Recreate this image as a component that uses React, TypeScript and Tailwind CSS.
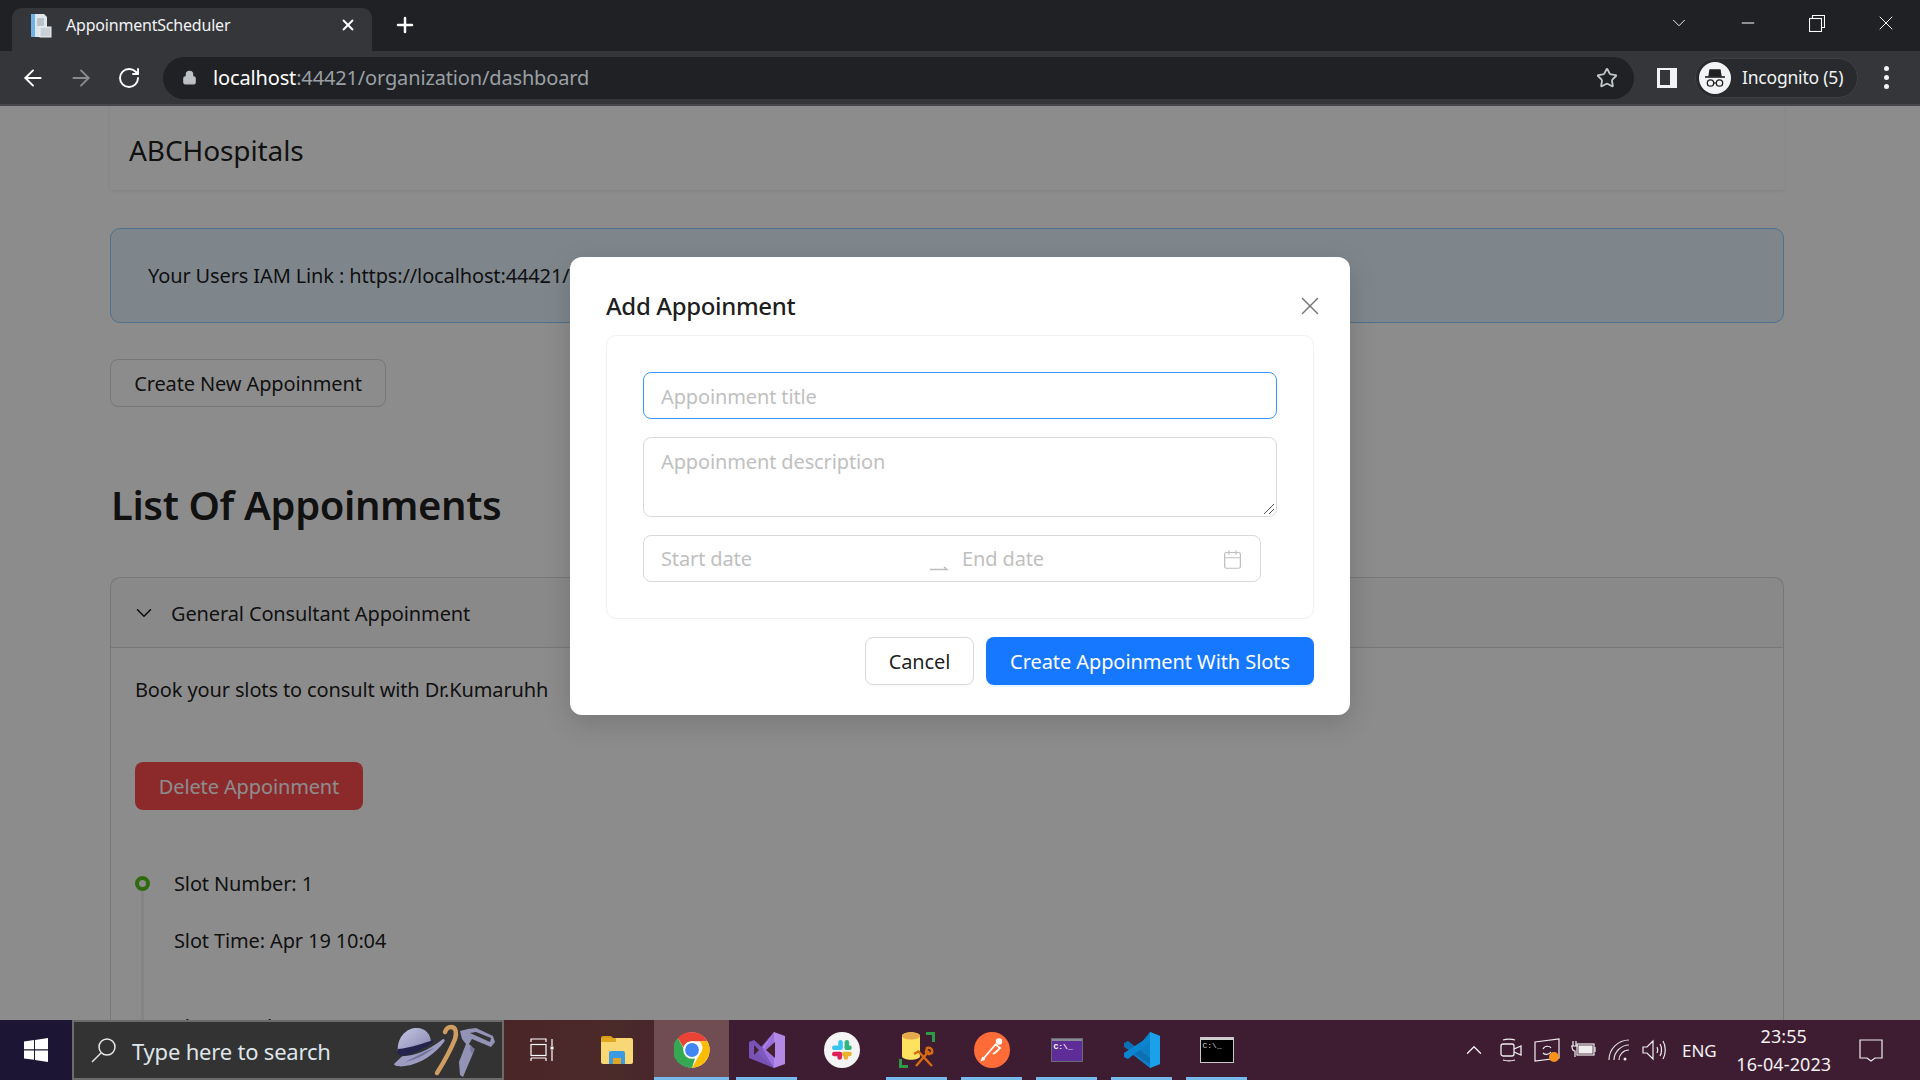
import React from "react";
import { ArrowLeft, ArrowRight, RotateCw, Lock, Star, Plus, X, ChevronDown, ChevronUp, Calendar, Minus } from "lucide-react";

const Seg = "font-['Noto_Sans','Open_Sans',sans-serif]";

function ChromeLogo({ s = 36 }: { s?: number }) {
  return (
    <svg width={s} height={s} viewBox="0 0 48 48">
      <circle cx="24" cy="24" r="23.5" fill="#fff" />
      <path d="M24 .5a23.5 23.5 0 0 1 20.4 11.8H24a11.7 11.7 0 0 0-11.2 8.2L5 7.9A23.5 23.5 0 0 1 24 .5z" fill="#ea4335" />
      <path d="M44.4 12.3A23.5 23.5 0 0 1 24 47.5l10.1-17.6a11.7 11.7 0 0 0 0-17.6z" fill="#fbbc04" />
      <path d="M24 47.5A23.5 23.5 0 0 1 5 7.9l10.1 17.7a11.7 11.7 0 0 0 13 9.4z" fill="#34a853" />
      <circle cx="24" cy="24" r="11.7" fill="#fff" />
      <circle cx="24" cy="24" r="9.2" fill="#4285f4" />
    </svg>
  );
}

function TabIcon() {
  return (
    <svg width="26" height="26" viewBox="0 0 26 26">
      <path d="M4 2h13l3 3v20H4z" fill="#dfe6ec" />
      <path d="M4 2h4v23H4z" fill="#6fb3e6" />
      <rect x="10" y="6" width="7" height="8" fill="#b9c3cc" />
      <rect x="13" y="15" width="11" height="10" fill="#c9d0d6" stroke="#eef1f4" />
    </svg>
  );
}

function TaskView() {
  return (
    <svg width="24" height="24" viewBox="0 0 24 24" fill="none" stroke="#fff" strokeWidth="1.2">
      <path d="M1 4V1h15v3M1 20v3M16 20v3M1 20h15" />
      <rect x="1" y="6.5" width="15" height="11" />
      <path d="M22 1v7M22 12v11" />
      <rect x="20.5" y="8.5" width="3" height="3" fill="#fff" stroke="none" />
    </svg>
  );
}

function Explorer() {
  return (
    <svg width="32" height="28" viewBox="0 0 32 28">
      <path d="M0 2a2 2 0 0 1 2-2h8l3 3H0z" fill="#d89d1b" />
      <rect x="0" y="2" width="32" height="26" rx="2" fill="#f8d775" />
      <rect x="0" y="2" width="15" height="4" fill="#e2a81f" />
      <path d="M8 28V17a2 2 0 0 1 2-2h12a2 2 0 0 1 2 2v11h-4v-6h-8v6z" fill="#3b9ae1" />
      <rect x="12" y="22" width="8" height="6" fill="#e0a526" />
    </svg>
  );
}

function VS() {
  return (
    <svg width="36" height="36" viewBox="0 0 36 36">
      <path d="M25 0l11 4v28l-11 4L9 21 13 15z" fill="#b388e6" />
      <path d="M25 0L9 21l-5-4L0 19v-2l5-6 6 5z" fill="#7b55bd" />
      <path d="M0 10l5-2 20 18v10L0 26z" fill="#7b55bd" opacity="0.95" />
      <path d="M25 0v36L14 18z" fill="#9b6fdc" />
      <path d="M26 10v16l-9-8z" fill="#45202f" />
      <path d="M5 13l5 5-5 5z" fill="#45202f" />
    </svg>
  );
}

function Slack() {
  return (
    <svg width="36" height="36" viewBox="0 0 36 36">
      <circle cx="18" cy="18" r="18" fill="#f4f4f4" />
      <g transform="translate(8 8) scale(0.9)">
        <rect x="7" y="0" width="5" height="9.5" rx="2.5" fill="#36c5f0" />
        <rect x="0" y="6" width="12" height="5" rx="2.5" fill="#36c5f0" />
        <rect x="14" y="0" width="5" height="11" rx="2.5" fill="#2eb67d" />
        <rect x="14" y="6" width="8" height="5" rx="2.5" fill="#2eb67d" />
        <rect x="11" y="13" width="11" height="5" rx="2.5" fill="#ecb22e" />
        <rect x="13" y="13" width="5" height="9" rx="2.5" fill="#ecb22e" />
        <rect x="0" y="13" width="11" height="5" rx="2.5" fill="#e01e5a" />
        <rect x="6" y="13" width="5" height="9" rx="2.5" fill="#e01e5a" />
      </g>
    </svg>
  );
}

function SqlTool() {
  return (
    <svg width="36" height="36" viewBox="0 0 36 36" fill="none">
      <path d="M3 4c0-5 18-5 18 0v20c0 5-18 5-18 0z" fill="#fde25f" />
      <ellipse cx="12" cy="4" rx="9" ry="3.5" fill="#e5a84a" />
      <path d="M27 1.5h7.5V10M1.5 27v7.5H9" stroke="#2f9a44" strokeWidth="3" />
      <path d="M17 34l13-15M33 34L19 19M15 22l5-3M28 16c3-1 6 1 5 5l-3 1-3-2z" stroke="#d96a12" strokeWidth="2.5" />
    </svg>
  );
}

function Postman() {
  return (
    <svg width="36" height="36" viewBox="0 0 36 36">
      <circle cx="18" cy="18" r="18" fill="#ff6c37" />
      <path d="M9 27l13-15M21 12l5 4-4 4-3 2M11 27l-3 1 1-3" stroke="#fff" strokeWidth="1.8" fill="none" />
      <circle cx="25" cy="9.5" r="3.2" fill="#fff" />
    </svg>
  );
}

function Term() {
  return (
    <div className="w-[32px] h-[24px] bg-[#5f2d98] border border-[#686a76] relative">
      <div className="h-[2px] bg-[#8a8a96]" />
      <span className="absolute left-[2px] top-[4px] text-[8px] leading-none font-['Liberation_Mono',monospace] text-white font-bold">C:\_</span>
    </div>
  );
}

function VSCode() {
  return (
    <svg width="36" height="36" viewBox="0 0 36 36">
      <path d="M26 0l10 4v28l-10 4L8 22z" fill="#0e7fc6" />
      <path d="M26 0l10 4v28l-10 4z" fill="#1ba1ea" />
      <path d="M0 11l4-2 22 17v6L0 15z" fill="#0d6fb3" />
      <path d="M0 25l4 2 22-17V4L0 21z" fill="#0a86d0" />
    </svg>
  );
}

function Cmd() {
  return (
    <div className="w-[34px] h-[26px] bg-black border border-[#c9c9c9] relative">
      <div className="h-[2px] bg-[#cfcfcf]" />
      <span className="absolute left-[2px] top-[4px] text-[8px] leading-none font-['Liberation_Mono',monospace] text-[#d8d8d8]">C:\_</span>
    </div>
  );
}

function SearchArt() {
  return (
    <svg width="118" height="60" viewBox="0 0 118 60">
      <defs>
        <linearGradient id="crown" x1="0" y1="0" x2="1" y2="1">
          <stop offset="0" stopColor="#c6c6e6" />
          <stop offset="1" stopColor="#8484ac" />
        </linearGradient>
      </defs>
      <path d="M13 33c-2-14 7-24 17-25 10-1 16 6 16 15z" fill="url(#crown)" />
      <path d="M13 28c11 4 24 0 34-9l1 4 -30 15z" fill="#8a8ab2" opacity="0" />
      <path d="M9 44c4-4 7-7 9-8 12 0 24-5 40-17 2 0 2 2 1 3C50 34 36 44 20 46c-5 1-11 0-11-2z" fill="#9c9cc2" />
      <path d="M17 36c10-1 21-7 30-13l2-3c-11 3-23 8-36 9l-1 4z" fill="#23234d" />
      <path d="M20 42c10-2 20-7 29-14-7 2-16 8-29 14z" fill="#70709a" />
      <path d="M52 53c7-11 14-24 18-34 2-6 1-12-4-12-3 0-5 2-6 5" fill="none" stroke="#cf9d62" strokeWidth="4.5" strokeLinecap="round" />
      <path d="M83 9l8-1 17 8 2 6-4 5-19-8-3 5c3 2 5 5 5 7l-11 26-3-2-1-13 7-18-4-5-2-8z" fill="#9393b6" />
      <path d="M85 13l20 9 1-4-15-6z" fill="#333333" />
      <path d="M85 26l5 3-3 5-2-4z" fill="#77779c" />
    </svg>
  );
}

function TaskSlot({ active, underline, children }: { active?: boolean; underline?: boolean; children: React.ReactNode }) {
  return (
    <div className={`w-[75px] h-[60px] relative flex items-center justify-center ${active ? "bg-[#6f4d52]" : ""}`}>
      {children}
      {underline && <div className={`absolute bottom-0 h-[3px] bg-[#76b9ed] ${active ? "left-0 right-0" : "left-[7px] right-[7px]"}`} />}
    </div>
  );
}

function Taskbar() {
  return (
    <div className="h-[60px] shrink-0 flex items-stretch bg-[#3e1c31] relative z-30 font-['Noto_Sans',sans-serif] text-white">
      <div className="w-[72px] bg-[#1c1533] flex items-center justify-center">
        <svg width="24" height="24" viewBox="0 0 24 24" fill="#fff">
          <path d="M0 3.5l10-1.4v9.2H0zM11 2l13-2v11.3H11zM0 12.4h10v9.4L0 20.4zM11 12.4h13V24l-13-2z" />
        </svg>
      </div>
      <div className="w-[432px] bg-[#333333] border-2 border-[#6b6b6b] flex items-center pl-[17px] relative">
        <svg width="26" height="26" viewBox="0 0 26 26" fill="none" stroke="#e8e8e8" strokeWidth="1.5">
          <circle cx="16" cy="10" r="8" />
          <path d="M10 16L1 25" />
        </svg>
        <span className="ml-[15px] pt-[3px] text-[22px] tracking-[-0.2px] text-[#dfe6ea]">Type here to search</span>
        <div className="absolute left-[311px] top-[-2px]"><SearchArt /></div>
      </div>
      <div className="flex bg-gradient-to-r from-[#4a2528] via-[#4b2a2a] to-[#421f30]">
        <TaskSlot><TaskView /></TaskSlot>
        <TaskSlot><Explorer /></TaskSlot>
        <TaskSlot active underline><ChromeLogo /></TaskSlot>
      </div>
      <div className="flex">
        <TaskSlot underline><VS /></TaskSlot>
        <TaskSlot><Slack /></TaskSlot>
        <TaskSlot underline><SqlTool /></TaskSlot>
        <TaskSlot underline><Postman /></TaskSlot>
        <TaskSlot underline><Term /></TaskSlot>
        <TaskSlot underline><VSCode /></TaskSlot>
        <TaskSlot underline><Cmd /></TaskSlot>
      </div>
      <div className="flex-1 flex items-center pl-[207px] text-[#f2f2f2]">
        <ChevronUp size={26} strokeWidth={1.2} />
        <svg className="ml-[12px]" width="24" height="24" viewBox="0 0 24 24" fill="none" stroke="#eee" strokeWidth="1.3">
          <rect x="2" y="6" width="13" height="12" rx="2" />
          <path d="M15 11l7-3v9l-7-3M4 2c3-1 9-1 12 0M4 22c3 1 9 1 12 0" />
        </svg>
        <svg className="ml-[11px]" width="26" height="26" viewBox="0 0 26 26" fill="none" stroke="#eee" strokeWidth="1.2">
          <path d="M1 5l24-3v19l-24 3z" />
          <path d="M9 12c2-4 7-3 8-1M17 15c-2 3-6 3-8 1" />
          <circle cx="20" cy="20" r="5" fill="#f7931a" stroke="none" />
        </svg>
        <svg className="ml-[10px]" width="26" height="20" viewBox="0 0 26 20" fill="none" stroke="#eee" strokeWidth="1.2">
          <rect x="7" y="4" width="17" height="11" />
          <rect x="9" y="6" width="13" height="7" fill="#eee" />
          <path d="M1 6h7M3 1v5M6 1v5M2 6c0 4 1 5 3 5v6" />
          <path d="M25 7v5" />
        </svg>
        <svg className="ml-[12px]" width="22" height="22" viewBox="0 0 22 22" fill="none" stroke="#ddd" strokeWidth="1.2">
          <path d="M1 21C1 10 10 1 21 1M6 21C6 13 13 6 21 6M11 21c0-5 4-10 10-10" />
          <circle cx="17" cy="20" r="1.5" fill="#eee" stroke="none" />
        </svg>
        <svg className="ml-[12px]" width="24" height="22" viewBox="0 0 24 22" fill="none" stroke="#eee" strokeWidth="1.2">
          <path d="M1 8h4l6-6v18l-6-6H1zM15 8c1 2 1 4 0 6M18 5c2 3 2 9 0 12M21 2c3 5 3 13 0 18" />
        </svg>
        <span className="ml-[16px] text-[17px] leading-none">ENG</span>
        <div className="w-[108px] ml-[13px] flex flex-col items-center text-[18px] leading-[28px] tracking-[0.1px]">
          <span>23:55</span>
          <span>16-04-2023</span>
        </div>
        <svg className="ml-[20px]" width="26" height="26" viewBox="0 0 26 26" fill="none" stroke="#eee" strokeWidth="1.2">
          <path d="M2 3h22v18h-7l-4 3-4-3H2z" />
        </svg>
      </div>
    </div>
  );
}

function BrowserChrome() {
  return (
    <div className="shrink-0 font-['Noto_Sans',sans-serif] text-white">
      <div className="h-[51px] bg-[#202124] flex items-end relative pl-[12px]">
        <div className="w-[360px] h-[43px] bg-[#35363a] rounded-t-[10px] flex items-center pl-[15px] pr-[15px] pb-[9px]">
          <TabIcon />
          <span className="ml-[13px] text-[16px] tracking-[-0.2px] flex-1 text-[#f1f3f4]">AppoinmentScheduler</span>
          <X size={18} strokeWidth={2.5} />
        </div>
        <div className="ml-[21px] h-[43px] flex items-center pb-[9px]"><Plus size={24} strokeWidth={2.5} /></div>
        <div className="flex-1" />
        <div className="absolute right-0 top-0 h-[46px] flex items-center text-white">
          <div className="w-[69px] flex justify-center"><ChevronDown size={22} strokeWidth={1} /></div>
          <div className="w-[69px] flex justify-center"><Minus size={20} strokeWidth={1.2} /></div>
          <div className="w-[69px] flex justify-center">
            <svg width="16" height="17" viewBox="0 0 16 17" fill="none" stroke="#fff" strokeWidth="1.1">
              <rect x="0.5" y="3.5" width="12" height="13" />
              <path d="M3.5 3.5V0.5h12v12h-3" />
            </svg>
          </div>
          <div className="w-[69px] flex justify-center"><X size={24} strokeWidth={1} /></div>
        </div>
      </div>
      <div className="h-[55px] bg-[#35363a] border-b-[2px] border-[#46474a] flex items-center pl-[20px]">
        <ArrowLeft size={26} strokeWidth={1.8} />
        <ArrowRight size={26} strokeWidth={1.8} className="ml-[22px] text-[#8a8b8d]" />
        <RotateCw size={24} strokeWidth={1.9} className="ml-[23px]" />
        <div className="ml-[22px] w-[1471px] h-[42px] rounded-full bg-[#202124] flex items-center pl-[19px] pr-[16px]">
          <Lock size={15} fill="#bdc1c6" stroke="#bdc1c6" strokeWidth={2} />
          <span className="ml-[16px] text-[20px] tracking-[-0.15px]">
            localhost<span className="text-[#9aa0a6]">:44421/organization/dashboard</span>
          </span>
          <div className="flex-1" />
          <Star size={22} strokeWidth={2} className="text-[#c4c7c9]" />
        </div>
        <div className="ml-[23px] w-[20px] h-[20px] bg-[#f1f3f4] flex items-center justify-center pr-[4px]">
          <div className="w-[10px] h-[15px] bg-[#35363a]" />
        </div>
        <div className="ml-[18px] w-[163px] h-[40px] rounded-full bg-[#292a2d] border border-[#3f4044] flex items-center pl-[3px]">
          <div className="w-[32px] h-[32px] rounded-full bg-[#f1f3f4] flex items-center justify-center">
            <svg width="24" height="24" viewBox="0 0 24 24" fill="none" stroke="#202124" strokeWidth="1.3">
              <path d="M7 4h10l1 6H6z" fill="#202124" />
              <path d="M2 11h20" strokeWidth="1.6" />
              <circle cx="7.5" cy="17" r="3.2" />
              <circle cx="16.5" cy="17" r="3.2" />
              <path d="M10.7 17h2.6" />
            </svg>
          </div>
          <span className="ml-[11px] text-[17.5px] tracking-[-0.2px] text-[#f1f3f4]">Incognito (5)</span>
        </div>
        <div className="ml-[26px] flex flex-col gap-[4px]">
          <div className="w-[5px] h-[5px] rounded-full bg-[#f1f3f4]" />
          <div className="w-[5px] h-[5px] rounded-full bg-[#f1f3f4]" />
          <div className="w-[5px] h-[5px] rounded-full bg-[#f1f3f4]" />
        </div>
      </div>
    </div>
  );
}

function Page() {
  return (
    <div className={`pl-[110px] pr-[136px] bg-white h-full text-[20px] tracking-[-0.13px] text-black/90 ${Seg}`}>
      <div className="h-[84px] bg-white shadow-[0_1px_3px_rgba(0,0,0,0.08)] flex items-center pl-[19px] pt-[3px] text-[28px] tracking-[-0.1px]">ABCHospitals</div>
      <div className="mt-[38px] h-[95px] rounded-[10px] bg-[#e6f4ff] border border-[#91caff] flex items-center pl-[37px] pt-[1px] whitespace-nowrap">
        Your Users IAM Link : https://localhost:44421/iam/users/ABCHospitals
      </div>
      <button className="mt-[36px] h-[48px] w-[276px] block rounded-[8px] bg-white border border-[#d9d9d9] text-center pt-[2px]">Create New Appoinment</button>
      <h1 className="mt-[70px] pl-px text-[40px] leading-[56px] font-semibold tracking-[-0.4px]">List Of Appoinments</h1>
      <div className="mt-[44px] rounded-t-[10px] border border-[#d9d9d9] border-b-0 h-[600px]">
        <div className="h-[70px] border-b border-[#d9d9d9] flex items-center pl-[20px] bg-black/[0.02]">
          <ChevronDown size={26} strokeWidth={1.4} />
          <span className="ml-[14px] pt-[2px]">General Consultant Appoinment</span>
        </div>
        <div className="pl-[24px] pt-[26px]">
          <p className="leading-[32px]">Book your slots to consult with Dr.Kumaruhh</p>
          <button className="mt-[56px] block h-[48px] w-[228px] rounded-[8px] bg-[#ff4d4f] text-white pt-[2px]">Delete Appoinment</button>
          <div className="mt-[58px] flex">
            <div className="w-[15px] flex flex-col items-center">
              <div className="mt-[8px] w-[15px] h-[15px] rounded-full border-[4px] border-[#52c41a] bg-white" />
              <div className="w-[3px] h-[300px] bg-black/[0.06]" />
            </div>
            <div className="ml-[24px]">
              <p className="leading-[32px]">Slot Number: 1</p>
              <p className="mt-[25px] leading-[32px]">Slot Time: Apr 19 10:04</p>
              <p className="mt-[54px] leading-[32px]">Slot Length</p>
            </div>
          </div>
        </div>
      </div>
    </div>
  );
}

function Modal() {
  return (
    <div className={`absolute left-[570px] top-[151px] w-[780px] h-[458px] bg-white rounded-[12px] shadow-[0_8px_28px_rgba(0,0,0,0.15)] px-[36px] pt-[24px] text-[20px] tracking-[-0.13px] ${Seg}`}>
      <div className="flex items-center justify-between h-[50px]">
        <span className="text-[24px] font-medium text-black/90 tracking-[-0.35px]">Add Appoinment</span>
        <X size={30} strokeWidth={1.1} className="text-[#757575] mr-[-11px]" />
      </div>
      <div className="mt-[4px] h-[284px] border border-[#f0f0f0] rounded-[10px] pt-[36px] px-[36px]">
        <input
          readOnly
          placeholder="Appoinment title"
          className="block w-full h-[47px] rounded-[8px] border border-[#4096ff] px-[17px] pt-[1px] outline-none placeholder:text-[#bfbfbf]"
        />
        <div className="relative mt-[18px]">
          <textarea
            readOnly
            placeholder="Appoinment description"
            className="block w-full h-[80px] resize-none rounded-[8px] border border-[#d9d9d9] px-[17px] pt-[9px] pb-[3px] outline-none placeholder:text-[#bfbfbf]"
          />
          <svg className="absolute right-[2px] bottom-[2px]" width="12" height="12" viewBox="0 0 12 12" fill="none" stroke="#555" strokeWidth="1">
            <path d="M1 11L11 1M6 11l5-5" />
          </svg>
        </div>
        <div className="mt-[18px] w-[618px] h-[47px] rounded-[8px] border border-[#d9d9d9] flex items-center pl-[17px] pr-[16px] pt-[1px] text-[#bfbfbf]">
          <span className="w-[268px]">Start date</span>
          <svg width="20" height="10" viewBox="0 0 20 10" fill="none" stroke="#bfbfbf" strokeWidth="1.5" className="mt-[14px]">
            <path d="M1 8.5h17L15 6" />
          </svg>
          <span className="ml-[13px] flex-1">End date</span>
          <Calendar size={21} strokeWidth={1.4} className="mr-[1px]" />
        </div>
      </div>
      <div className="mt-[18px] flex justify-end gap-[12px]">
        <button className="h-[48px] w-[109px] rounded-[8px] border border-[#d9d9d9] bg-white text-black/90 pt-[2px] shadow-[0_2px_0_rgba(0,0,0,0.02)]">Cancel</button>
        <button className="h-[48px] w-[328px] rounded-[8px] bg-[#1677ff] text-white pt-[2px] tracking-[-0.08px] shadow-[0_2px_0_rgba(5,145,255,0.1)]">Create Appoinment With Slots</button>
      </div>
    </div>
  );
}

export default function App() {
  return (
    <div className="w-[1920px] h-[1080px] flex flex-col overflow-hidden bg-white">
      <BrowserChrome />
      <div className="flex-1 relative overflow-hidden min-h-0">
        <Page />
        <div className="absolute inset-0 bg-black/45" />
        <Modal />
      </div>
      <Taskbar />
    </div>
  );
}
